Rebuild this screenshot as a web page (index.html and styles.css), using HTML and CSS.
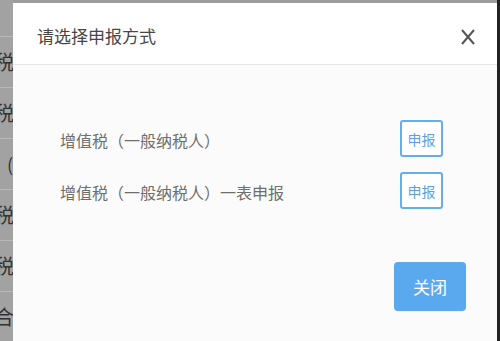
FILE: index.html
```html
<!DOCTYPE html>
<html lang="zh">
<head>
<meta charset="utf-8">
<link rel="stylesheet" href="styles.css">
</head>
<body>
<div class="page">
  <div class="backdrop">
    <div class="bg-row top"></div>
    <div class="bg-row"><span class="bg-cell">税</span></div>
    <div class="bg-row"><span class="bg-cell">税</span></div>
    <div class="bg-row"><span class="bg-cell paren">(</span></div>
    <div class="bg-row"><span class="bg-cell">税</span></div>
    <div class="bg-row"><span class="bg-cell">税</span></div>
    <div class="bg-row"><span class="bg-cell">合</span></div>
  </div>
  <div class="edge"></div>
  <div class="modal">
    <div class="modal-header">
      <span class="modal-title">请选择申报方式</span>
      <svg class="close" width="16" height="18" viewBox="0 0 16 18"><path d="M2 2 L14 16 M14 2 L2 16" stroke="#555" stroke-width="2" fill="none"/></svg>
    </div>
    <div class="modal-body">
      <div class="options">
        <div class="option">
          <span class="option-label">增值税（一般纳税人）</span>
          <button class="btn-outline">申报</button>
        </div>
        <div class="option">
          <span class="option-label">增值税（一般纳税人）一表申报</span>
          <button class="btn-outline">申报</button>
        </div>
      </div>
      <div class="footer">
        <button class="btn-primary">关闭</button>
      </div>
    </div>
  </div>
</div>
</body>
</html>
```
FILE: styles.css
```css
* { box-sizing: border-box; }
html, body { margin: 0; padding: 0; }
body {
  width: 500px;
  height: 341px;
  overflow: hidden;
  font-family: "Noto Sans CJK SC", "Noto Sans", sans-serif;
  background: #9c9c9c;
}
.page {
  position: relative;
  width: 500px;
  height: 341px;
  overflow: hidden;
}
.backdrop {
  display: flex;
  flex-direction: column;
  width: 13px;
  background: #a2a2a2;
}
.bg-row {
  height: 51px;
  border-bottom: 1px solid #b8b8b8;
  display: flex;
  align-items: center;
  justify-content: flex-start;
  overflow: hidden;
}
.bg-row.top { height: 37px; }
.bg-cell {
  font-size: 20px;
  color: #333;
  white-space: nowrap;
  margin-left: -6px;
  line-height: 1;
}
.bg-cell.paren { margin-left: 7px; font-size: 18px; }
.edge {
  position: absolute;
  right: 0;
  top: 0;
  width: 3px;
  height: 341px;
  background: #222;
}
.modal {
  position: absolute;
  left: 13px;
  top: 3px;
  width: 484px;
  height: 360px;
  background: #fbfbfb;
  display: flex;
  flex-direction: column;
}
.modal-header {
  height: 62px;
  background: #fff;
  border-bottom: 1px solid #e6e6e6;
  display: flex;
  align-items: center;
  justify-content: space-between;
  padding: 4px 21px 0 24px;
}
.modal-title {
  font-size: 17px;
  color: #474747;
}
.close { display: block; margin-top: 3px; }
.modal-body {
  display: flex;
  flex-direction: column;
  padding: 55px 54px 0 47px;
}
.options {
  display: flex;
  flex-direction: column;
  gap: 15px;
}
.option {
  display: flex;
  align-items: center;
  justify-content: space-between;
  height: 37px;
}
.option-label {
  font-size: 16px;
  color: #6e6e6e;
  margin-top: 3px;
}
.btn-outline {
  width: 43px;
  height: 37px;
  padding: 0;
  border: 2px solid #66aeea;
  border-radius: 3px;
  background: #fff;
  color: #5a9fdc;
  font-family: inherit;
  font-size: 14px;
}
.footer {
  display: flex;
  justify-content: flex-end;
  margin-top: 53px;
  margin-right: -23px;
}
.btn-primary {
  width: 72px;
  height: 49px;
  padding: 0;
  border: none;
  border-radius: 4px;
  background: #5aa9ef;
  color: #fff;
  font-family: inherit;
  font-size: 17px;
}
```
